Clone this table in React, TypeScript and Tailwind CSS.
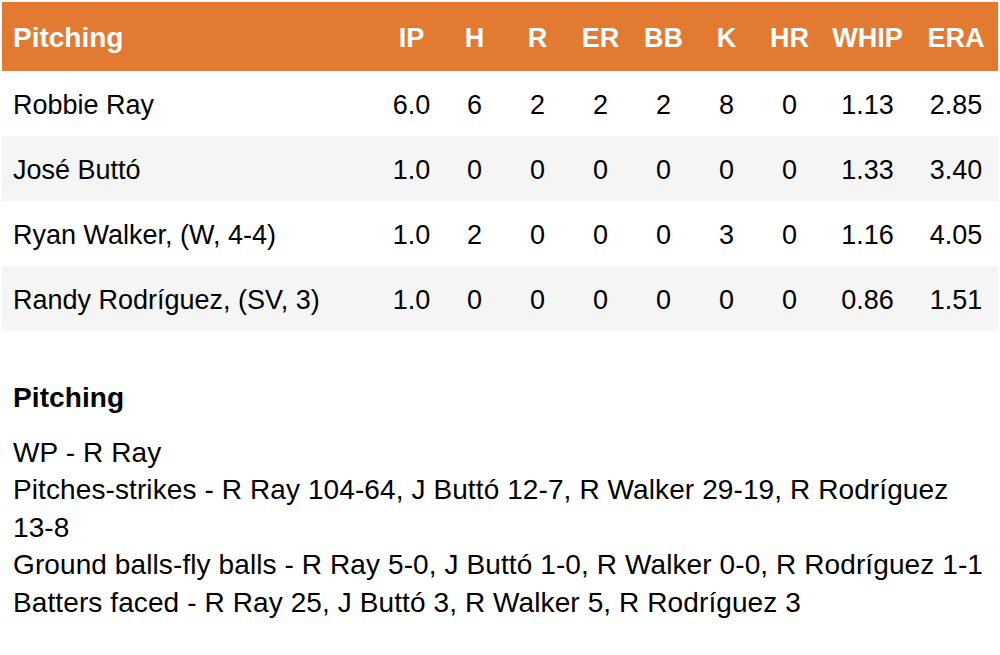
import React from "react";

const rows = [
  { name: "Robbie Ray", s: ["6.0", "6", "2", "2", "2", "8", "0", "1.13", "2.85"] },
  { name: "José Buttó", s: ["1.0", "0", "0", "0", "0", "0", "0", "1.33", "3.40"] },
  { name: "Ryan Walker, (W, 4-4)", s: ["1.0", "2", "0", "0", "0", "3", "0", "1.16", "4.05"] },
  { name: "Randy Rodríguez, (SV, 3)", s: ["1.0", "0", "0", "0", "0", "0", "0", "0.86", "1.51"] },
];

const heads = ["IP", "H", "R", "ER", "BB", "K", "HR", "WHIP", "ERA"];
const widths = ["w-[63px]", "w-[63px]", "w-[63px]", "w-[63px]", "w-[63px]", "w-[63px]", "w-[63px]", "w-[93px]", "w-[84px]"];

export default function App() {
  return (
    <div
      className="w-[1000px] h-[655px] bg-white text-black px-[2px] pt-[2px] text-[27px]"
      style={{ fontFamily: '"Liberation Sans", Arial, Helvetica, sans-serif' }}
    >
      <div className="flex h-[69px] items-center pt-[3px] bg-[#e27a31] text-white font-bold">
        <div className="flex-1 pl-[11px] text-[28px]">Pitching</div>
        {heads.map((h, i) => (
          <div key={h} className={`${widths[i]} text-center`}>{h}</div>
        ))}
      </div>
      {rows.map((r, ri) => (
        <div key={r.name} className={`flex h-[65px] items-center pt-[3px] ${ri % 2 === 1 ? "bg-[#f5f5f5]" : "bg-white"}`}>
          <div className="flex-1 pl-[11px]">{r.name}</div>
          {r.s.map((v, i) => (
            <div key={i} className={`${widths[i]} text-center`}>{v}</div>
          ))}
        </div>
      ))}
      <div className="pl-[11px] pr-0 mt-[48px] leading-[37.5px] text-[28px] tracking-[0.1px]">
        <div className="font-bold">Pitching</div>
        <div className="mt-[17px]">
          <div>WP - R Ray</div>
          <div>
            Pitches-strikes - R Ray 104-64, J Buttó 12-7, R Walker 29-19, R Rodríguez{" "}
            <span className="whitespace-nowrap">13-8</span>
          </div>
          <div>Ground balls-fly balls - R Ray 5-0, J Buttó 1-0, R Walker 0-0, R Rodríguez 1-1</div>
          <div>Batters faced - R Ray 25, J Buttó 3, R Walker 5, R Rodríguez 3</div>
        </div>
      </div>
    </div>
  );
}
